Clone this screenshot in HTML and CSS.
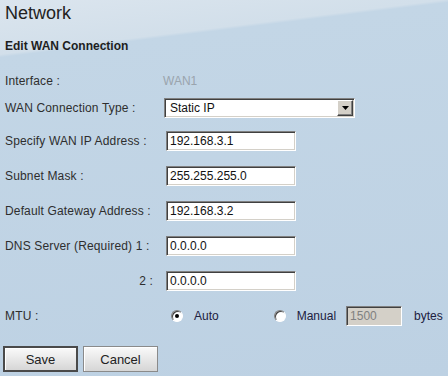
FILE: index.html
```html
<!DOCTYPE html>
<html lang="en">
<head>
  <meta charset="UTF-8" />
  <meta name="viewport" content="width=device-width, initial-scale=1.0" />
  <title>Network - Edit WAN Connection</title>
  <link rel="stylesheet" href="styles.css">
</head>
<body>
  <div class="page">
    <h1 class="title">Network</h1>
    <h2 class="subtitle">Edit WAN Connection</h2>

    <div class="form">
      <div class="row row-iface">
        <span class="label">Interface :</span>
        <span class="value">WAN1</span>
      </div>

      <div class="row row-type">
        <span class="label">WAN Connection Type :</span>
        <div class="select">
          <span class="select-text">Static IP</span>
          <span class="select-arrow">
            <svg width="7" height="4" viewBox="0 0 7 4"><path d="M0 0h7L3.5 4z" fill="#000"/></svg>
          </span>
        </div>
      </div>

      <div class="row">
        <span class="label">Specify WAN IP Address :</span>
        <span class="field">192.168.3.1</span>
      </div>

      <div class="row">
        <span class="label">Subnet Mask :</span>
        <span class="field">255.255.255.0</span>
      </div>

      <div class="row">
        <span class="label">Default Gateway Address :</span>
        <span class="field">192.168.3.2</span>
      </div>

      <div class="row">
        <span class="label">DNS Server (Required) 1 :</span>
        <span class="field">0.0.0.0</span>
      </div>

      <div class="row">
        <span class="label label-right">2 :</span>
        <span class="field">0.0.0.0</span>
      </div>

      <div class="row row-mtu">
        <span class="label">MTU :</span>
        <span class="radio radio-auto checked"><span class="dot"></span></span>
        <span class="opt">Auto</span>
        <span class="radio radio-manual"></span>
        <span class="opt">Manual</span>
        <span class="field field-mtu">1500</span>
        <span class="opt opt-unit">bytes</span>
      </div>
    </div>

    <div class="buttons">
      <button class="btn btn-default">Save</button>
      <button class="btn">Cancel</button>
    </div>
  </div>
</body>
</html>
```

FILE: styles.css
```css
html, body {
  margin: 0;
  height: 100%;
}

body {
  font-family: 'Liberation Sans', Arial, sans-serif;
  font-size: 12px;
  color: #2e2e2e;
  background: linear-gradient(173deg, #dbe5ee 0, #d2dfea 54px, #c3d6e6 57px, #bdd1e3 100%);
  overflow: hidden;
}

.page {
  padding: 3px 4px 0 4px;
}

.title {
  margin: 0;
  padding-left: 1px;
  font-size: 18px;
  line-height: 21px;
  font-weight: normal;
  color: #222;
}

.subtitle {
  margin: 15px 0 0 0;
  padding-left: 1px;
  font-size: 12px;
  line-height: 14px;
  font-weight: bold;
  color: #1e1e1e;
}

.form {
  margin-top: 18px;
}

.row {
  display: flex;
  align-items: center;
  height: 20px;
  margin-bottom: 15px;
}

.row-iface { margin-bottom: 7px; }
.row-type { margin-bottom: 13px; }

.label {
  width: 160px;
  flex: none;
  box-sizing: border-box;
  padding-left: 1px;
  letter-spacing: 0.15px;
}

.label-right {
  text-align: right;
  padding-right: 11px;
}

.value {
  color: #9aa4ad;
  margin-left: -1px;
}

.select {
  display: flex;
  align-items: center;
  width: 191px;
  height: 20px;
  box-sizing: border-box;
  background: #fff;
  border: 1px solid;
  border-color: #808080 #fff #fff #808080;
  box-shadow: inset 1px 1px #404040, inset -1px -1px #d4d0c8;
  padding: 1px 1px 1px 2px;
}

.select-text {
  flex: 1;
  line-height: 14px;
  padding-left: 3px;
  color: #111;
}

.select-arrow {
  width: 16px;
  height: 16px;
  box-sizing: border-box;
  display: flex;
  align-items: center;
  justify-content: center;
  background: #d4d0c8;
  border: 1px solid;
  border-color: #fff #404040 #404040 #fff;
  box-shadow: inset -1px -1px #808080;
}

.field {
  width: 130px;
  height: 20px;
  box-sizing: border-box;
  margin-left: 2px;
  padding: 2px 3px;
  line-height: 14px;
  background: #fff;
  color: #111;
  border: 1px solid;
  border-color: #808080 #fff #fff #808080;
  box-shadow: inset 1px 1px #404040, inset -1px -1px #d4d0c8;
}

.radio {
  width: 12px;
  height: 12px;
  box-sizing: border-box;
  border-radius: 50%;
  background: #fff;
  border: 1px solid;
  border-color: #808080 #fff #fff #808080;
  box-shadow: inset 1px 1px #404040;
  display: flex;
  align-items: center;
  justify-content: center;
  flex: none;
}

.radio .dot {
  width: 4px;
  height: 4px;
  border-radius: 50%;
  background: #000;
}

.radio-auto { margin-left: 7px; }
.radio-manual { margin-left: 55px; }

.opt {
  color: #202040;
  margin-left: 11px;
}

.field-mtu {
  width: 56px;
  margin-left: 10px;
  background: #d4d0c8;
  color: #808080;
}

.opt-unit { margin-left: 12px; }

.buttons {
  display: flex;
  gap: 5px;
  margin-top: 20px;
  margin-left: -1px;
}

.btn {
  width: 75px;
  height: 26px;
  font-family: 'Liberation Sans', Arial, sans-serif;
  font-size: 13px;
  color: #222;
  background: linear-gradient(#fafafa, #e8e8e8 50%, #d6d6d6);
  border: 1px solid #8a8a8a;
  box-shadow: inset 1px 1px #fff;
  padding: 0;
}

.btn-default {
  border: 2px solid #4a4a4a;
}
```
